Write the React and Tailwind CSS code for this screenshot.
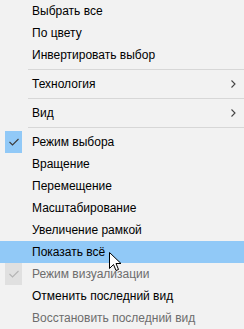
const items = [
  { label: 'Выбрать все' },
  { label: 'По цвету' },
  { label: 'Инвертировать выбор' },
  { sep: true },
  { label: 'Технология', sub: true },
  { sep: true },
  { label: 'Вид', sub: true },
  { sep: true },
  { label: 'Режим выбора', checked: true },
  { label: 'Вращение' },
  { label: 'Перемещение' },
  { label: 'Масштабирование' },
  { label: 'Увеличение рамкой' },
  { label: 'Показать всё', hover: true },
  { label: 'Режим визуализации', checked: true, disabled: true },
  { label: 'Отменить последний вид' },
  { label: 'Восстановить последний вид', disabled: true },
]

function Check({ disabled }) {
  return (
    <svg width="10" height="8" viewBox="0 0 10 8">
      <path d="M0.5 4 L3.5 7 L9.5 1" fill="none" stroke={disabled ? '#b4b4b4' : '#3c3c3c'} strokeWidth="1.1" />
    </svg>
  )
}

function Chevron() {
  return (
    <svg width="5" height="8" viewBox="0 0 5 8">
      <path d="M0.5 0.5 L4 4 L0.5 7.5" fill="none" stroke="#444" strokeWidth="1.1" />
    </svg>
  )
}

export default function App() {
  return (
    <div className="relative w-[244px] h-[329px] overflow-hidden bg-[#f2f2f2] text-[12px] font-['Segoe_UI','Liberation_Sans',sans-serif]">
      {items.map((it, i) =>
        it.sep ? (
          <div key={i} className="h-[7px] pl-[28px] pt-[3px]">
            <div className="h-px bg-[#d7d7d7]" />
          </div>
        ) : (
          <div
            key={i}
            className={`flex h-[22px] items-center ${it.hover ? 'bg-[#91c9f7]' : ''} ${it.disabled ? 'text-[#6d6d6d]' : 'text-black'}`}
          >
            <div className="w-[32px] h-full flex items-center">
              {it.checked && (
                <div className={`ml-[5px] w-[17px] h-full flex items-center justify-center ${it.disabled ? 'bg-[#e0e0e0]' : 'bg-[#91c9f7]'}`}>
                  <Check disabled={it.disabled} />
                </div>
              )}
            </div>
            <span className="flex-1 leading-none">{it.label}</span>
            {it.sub && (
              <div className="w-[13px] flex items-center">
                <Chevron />
              </div>
            )}
          </div>
        )
      )}
      <svg className="absolute left-[109px] top-[252px]" width="13" height="20" viewBox="0 0 13 20">
        <path d="M0.5 0.5 L0.5 16.5 L4.5 12.5 L7 18.5 L9.5 17.5 L7 11.5 L12 11.5 Z" fill="#fff" stroke="#000" strokeWidth="1" strokeLinejoin="miter" />
      </svg>
    </div>
  )
}
